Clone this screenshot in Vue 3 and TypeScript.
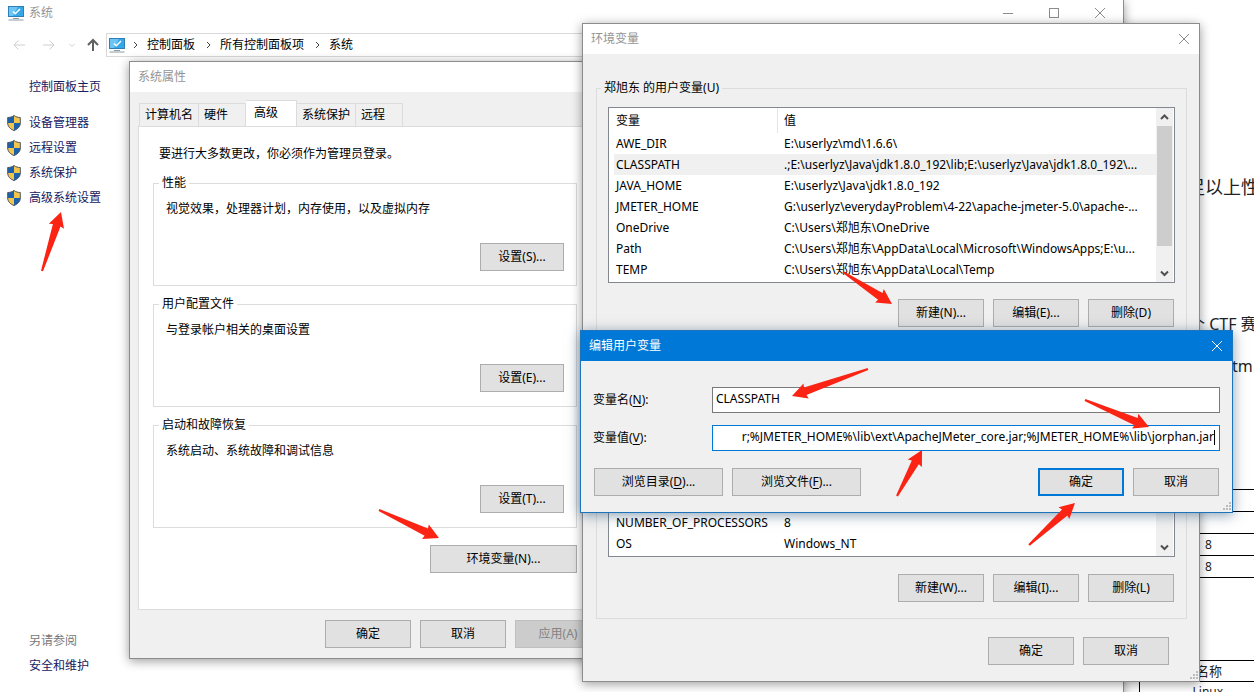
<script setup lang="ts">
import { ref } from 'vue'

interface Variable {
  name: string
  value: string
}

interface Arrow {
  tail: [number, number]
  tip: [number, number]
}

const crumbs: string[] = ['控制面板', '所有控制面板项', '系统']
const sideLinks: string[] = ['设备管理器', '远程设置', '系统保护', '高级系统设置']
const tabs: string[] = ['计算机名', '硬件', '高级', '系统保护', '远程']
const activeTab = ref('高级')

const groups = [
  { title: '性能', text: '视觉效果，处理器计划，内存使用，以及虚拟内存', button: '设置(S)...' },
  { title: '用户配置文件', text: '与登录帐户相关的桌面设置', button: '设置(E)...' },
  { title: '启动和故障恢复', text: '系统启动、系统故障和调试信息', button: '设置(T)...' },
]

const userVars: Variable[] = [
  { name: 'AWE_DIR', value: 'E:\\userlyz\\md\\1.6.6\\' },
  { name: 'CLASSPATH', value: '.;E:\\userlyz\\Java\\jdk1.8.0_192\\lib;E:\\userlyz\\Java\\jdk1.8.0_192\\...' },
  { name: 'JAVA_HOME', value: 'E:\\userlyz\\Java\\jdk1.8.0_192' },
  { name: 'JMETER_HOME', value: 'G:\\userlyz\\everydayProblem\\4-22\\apache-jmeter-5.0\\apache-...' },
  { name: 'OneDrive', value: 'C:\\Users\\郑旭东\\OneDrive' },
  { name: 'Path', value: 'C:\\Users\\郑旭东\\AppData\\Local\\Microsoft\\WindowsApps;E:\\u...' },
  { name: 'TEMP', value: 'C:\\Users\\郑旭东\\AppData\\Local\\Temp' },
]
const selected = ref('CLASSPATH')

const systemVars: Variable[] = [
  { name: 'NUMBER_OF_PROCESSORS', value: '8' },
  { name: 'OS', value: 'Windows_NT' },
]

const varName = ref('CLASSPATH')
const varValue = ref('r;%JMETER_HOME%\\lib\\ext\\ApacheJMeter_core.jar;%JMETER_HOME%\\lib\\jorphan.jar')

const arrows: Arrow[] = [
  { tail: [42, 271], tip: [61, 212] },
  { tail: [379, 510], tip: [439, 538] },
  { tail: [843, 272], tip: [892, 304] },
  { tail: [868, 369], tip: [792, 396] },
  { tail: [1085, 400], tip: [1149, 427] },
  { tail: [897, 496], tip: [922, 450] },
  { tail: [1029, 545], tip: [1075, 503] },
]

// Outline of a tapered arrow: narrow at the tail, barbed at the head.
function outline({ tail, tip }: Arrow): string {
  const dx = tail[0] - tip[0]
  const dy = tail[1] - tip[1]
  const length = Math.hypot(dx, dy)
  const ux = dx / length
  const uy = dy / length
  const shape: [number, number][] = [
    [0, 0], [15, 8], [14, 4], [length, 1], [length, -1], [14, -4], [15, -8],
  ]
  return shape
    .map(([a, p]) => `${(tip[0] + ux * a - uy * p).toFixed(1)},${(tip[1] + uy * a + ux * p).toFixed(1)}`)
    .join(' ')
}
</script>

<template>
  <main class="desktop">
    <article class="document">
      <p class="line-one">足以上性</p>
      <p class="line-two">个 CTF 赛</p>
      <p class="line-three">tm</p>
      <table class="grid-a">
        <tbody>
          <tr><td></td></tr>
          <tr><td></td></tr>
          <tr><td>8</td></tr>
          <tr><td>8</td></tr>
        </tbody>
      </table>
      <table class="grid-b">
        <tbody>
          <tr><td colspan="2" class="name">名称</td></tr>
          <tr><td class="narrow"></td><td class="os">Linux</td></tr>
        </tbody>
      </table>
    </article>

    <section class="window system">
      <header class="titlebar">
        <svg class="monitor" viewBox="0 0 16 16" aria-hidden="true">
          <rect x="0.5" y="1.5" width="15" height="10" fill="#35a7e8" stroke="#2d7fb5" />
          <path d="M1 2h9L5 11H1z" fill="#6cc5f3" />
          <path d="M5 6.500l2.300 2.300L12 4" fill="none" stroke="#fff" stroke-width="1.500" />
          <path d="M5 13.500h6M0.500 15h15" stroke="#8d9ba5" />
        </svg>
        <h1>系统</h1>
        <div class="controls">
          <button type="button" aria-label="最小化"><svg viewBox="0 0 12 12"><path d="M1 6.500h10" /></svg></button>
          <button type="button" aria-label="最大化"><svg viewBox="0 0 12 12"><rect x="1.5" y="1.5" width="9" height="9" /></svg></button>
          <button type="button" aria-label="关闭"><svg viewBox="0 0 12 12"><path d="M1 1l10 10M11 1L1 11" /></svg></button>
        </div>
      </header>
      <nav class="navbar">
        <button type="button" aria-label="后退"><svg class="nav-arrow" viewBox="0 0 14 14"><path d="M13 7H2M6.500 2.500L2 7l4.500 4.500" /></svg></button>
        <button type="button" aria-label="前进"><svg class="nav-arrow" viewBox="0 0 14 14"><path d="M1 7h11M7.500 2.500L12 7l-4.500 4.500" /></svg></button>
        <button type="button" class="recent" aria-label="最近"><svg class="nav-arrow small" viewBox="0 0 8 8"><path d="M1.500 3L4 5.500 6.500 3" /></svg></button>
        <button type="button" aria-label="向上"><svg class="nav-arrow up" viewBox="0 0 14 14"><path d="M7 13V2M2 7l5-5 5 5" /></svg></button>
        <div class="address">
          <svg class="monitor" viewBox="0 0 16 16" aria-hidden="true">
            <rect x="0.5" y="1.5" width="15" height="10" fill="#35a7e8" stroke="#2d7fb5" />
            <path d="M1 2h9L5 11H1z" fill="#6cc5f3" />
            <path d="M5 6.500l2.300 2.300L12 4" fill="none" stroke="#fff" stroke-width="1.500" />
            <path d="M5 13.500h6M0.500 15h15" stroke="#8d9ba5" />
          </svg>
          <template v-for="crumb in crumbs" :key="crumb">
            <svg class="chevron" viewBox="0 0 5 8" aria-hidden="true"><path d="M1 1l3 3-3 3" /></svg>
            <a href="#">{{ crumb }}</a>
          </template>
        </div>
      </nav>
      <aside class="sidebar">
        <a href="#" class="home">控制面板主页</a>
        <a v-for="link in sideLinks" :key="link" href="#" class="task">
          <svg class="shield" viewBox="0 0 14 16" aria-hidden="true">
            <path d="M7 0.500C5 2 3 2.500 0.700 2.500V8c0 3.500 2.500 6 6.300 7.500z" fill="#1b62ae" />
            <path d="M7 0.500c2 1.500 4 2 6.300 2V8c0 3.500-2.500 6-6.300 7.500z" fill="#f3c64b" />
            <path d="M0.700 8H7v7.500C3.200 14 0.700 11.500 0.700 8z" fill="#f3c64b" />
            <path d="M7 8h6.300c0 3.500-2.500 6-6.300 7.500z" fill="#1b62ae" />
            <path d="M7 0.500C5 2 3 2.500 0.700 2.500V8c0 3.500 2.500 6 6.300 7.500 3.800-1.500 6.300-4 6.300-7.500V2.500C11 2.500 9 2 7 0.500z" fill="none" stroke="#4c5560" />
          </svg>
          {{ link }}
        </a>
        <p class="see-also">另请参阅</p>
        <a href="#" class="maintenance">安全和维护</a>
      </aside>
    </section>

    <section class="window properties">
      <header class="titlebar"><h2>系统属性</h2></header>
      <div class="props-body">
        <div class="tabs" role="tablist">
          <button
            v-for="tab in tabs"
            :key="tab"
            type="button"
            role="tab"
            :aria-selected="tab === activeTab"
            :class="{ active: tab === activeTab }"
            @click="activeTab = tab"
          >{{ tab }}</button>
        </div>
        <div class="panel">
          <p class="notice">要进行大多数更改，你必须作为管理员登录。</p>
          <fieldset v-for="group in groups" :key="group.title">
            <legend>{{ group.title }}</legend>
            <p>{{ group.text }}</p>
            <button type="button" class="btn">{{ group.button }}</button>
          </fieldset>
          <button type="button" class="btn env-button">环境变量(N)...</button>
        </div>
        <div class="footer">
          <button type="button" class="btn">确定</button>
          <button type="button" class="btn">取消</button>
          <button type="button" class="btn" disabled>应用(A)</button>
        </div>
      </div>
    </section>

    <section class="window environment">
      <header class="titlebar">
        <h2>环境变量</h2>
        <button type="button" class="close" aria-label="关闭"><svg viewBox="0 0 12 12"><path d="M1 1l10 10M11 1L1 11" /></svg></button>
      </header>
      <div class="env-body">
        <fieldset>
          <legend>郑旭东 的用户变量(U)</legend>
          <div class="list">
            <table>
              <thead>
                <tr><th scope="col"><div class="divided">变量</div></th><th scope="col">值</th></tr>
              </thead>
              <tbody>
                <tr
                  v-for="item in userVars"
                  :key="item.name"
                  :class="{ selected: item.name === selected }"
                  @click="selected = item.name"
                >
                  <td>{{ item.name }}</td>
                  <td>{{ item.value }}</td>
                </tr>
              </tbody>
            </table>
            <div class="scrollbar">
              <svg viewBox="0 0 17 17"><path d="M5 10.500L8.500 7l3.500 3.500" /></svg>
              <div class="track"><div class="thumb"></div></div>
              <svg viewBox="0 0 17 17"><path d="M5 7l3.500 3.500L12 7" /></svg>
            </div>
          </div>
          <div class="actions">
            <button type="button" class="btn">新建(N)...</button>
            <button type="button" class="btn">编辑(E)...</button>
            <button type="button" class="btn">删除(D)</button>
          </div>
        </fieldset>
        <fieldset class="untitled">
          <div class="list end">
            <table>
              <tbody>
                <tr v-for="item in systemVars" :key="item.name">
                  <td>{{ item.name }}</td>
                  <td>{{ item.value }}</td>
                </tr>
              </tbody>
            </table>
            <div class="scrollbar">
              <svg viewBox="0 0 17 17"><path d="M5 10.500L8.500 7l3.500 3.500" /></svg>
              <div class="track"></div>
              <svg viewBox="0 0 17 17"><path d="M5 7l3.500 3.500L12 7" /></svg>
            </div>
          </div>
          <div class="actions">
            <button type="button" class="btn">新建(W)...</button>
            <button type="button" class="btn">编辑(I)...</button>
            <button type="button" class="btn">删除(L)</button>
          </div>
        </fieldset>
        <div class="footer">
          <button type="button" class="btn">确定</button>
          <button type="button" class="btn">取消</button>
        </div>
      </div>
      <svg class="grip" viewBox="0 0 10 10" aria-hidden="true">
        <path d="M7 0h2v2H7zM7 3h2v2H7zM4 3h2v2H4zM7 6h2v2H7zM4 6h2v2H4zM1 6h2v2H1z" />
      </svg>
    </section>

    <section class="window editor">
      <header class="titlebar">
        <h2>编辑用户变量</h2>
        <button type="button" class="close" aria-label="关闭"><svg viewBox="0 0 12 12"><path d="M1 1l10 10M11 1L1 11" /></svg></button>
      </header>
      <form class="edit-body" @submit.prevent>
        <label for="var-name">变量名(<u>N</u>):</label>
        <div class="field"><input id="var-name" v-model="varName" type="text" /></div>
        <label for="var-value">变量值(<u>V</u>):</label>
        <div class="field focused">
          <input id="var-value" v-model="varValue" type="text" />
          <span class="caret"></span>
        </div>
        <div class="edit-actions">
          <button type="button" class="btn wide">浏览目录(<u>D</u>)...</button>
          <button type="button" class="btn wide">浏览文件(<u>F</u>)...</button>
          <button type="submit" class="btn primary">确定</button>
          <button type="button" class="btn">取消</button>
        </div>
      </form>
      <svg class="grip" viewBox="0 0 10 10" aria-hidden="true">
        <path d="M7 0h2v2H7zM7 3h2v2H7zM4 3h2v2H4zM7 6h2v2H7zM4 6h2v2H4zM1 6h2v2H1z" />
      </svg>
    </section>

    <svg class="arrows" aria-hidden="true">
      <polygon v-for="(arrow, i) in arrows" :key="i" :points="outline(arrow)" />
    </svg>
  </main>
</template>

<style>
body {
  margin: 0;
  overflow: hidden;
}
</style>

<style scoped>
.desktop {
  position: relative;
  height: 100vh;
  overflow: hidden;
  background: #fff;
  color: #000;
  font-family: "Noto Sans", "Noto Sans CJK SC", sans-serif;
  font-size: 12px;
  line-height: 16px;
}
.desktop * {
  box-sizing: border-box;
}
h1,
h2,
p {
  margin: 0;
  font-size: 12px;
  font-weight: 400;
}
button,
input {
  font: inherit;
  color: inherit;
}
button {
  padding: 0;
  border: 0;
  background: none;
}
a {
  color: inherit;
  text-decoration: none;
}
u {
  text-underline-offset: 2px;
}
table {
  border-collapse: collapse;
}

/* Document behind the windows */
.document {
  position: absolute;
  top: 0;
  right: 0;
  width: 134px;
  padding-top: 175px;
  color: #222;
  line-height: 24px;
  white-space: nowrap;
}
.document p {
  font-size: 16px;
}
.document .line-one {
  margin-left: 67px;
  font-size: 18px;
}
.document .line-two {
  margin-top: 113px;
  margin-left: 69px;
}
.document .line-three {
  margin-top: 18px;
  margin-left: 112px;
}
.document table {
  width: 100%;
  line-height: 16px;
}
.document td {
  height: 22px;
  padding: 0;
  border-top: 1px solid #000;
  border-bottom: 1px solid #000;
}
.grid-a {
  margin-top: 111px;
}
.grid-a td {
  padding-left: 85px;
}
.grid-b {
  margin-top: 82px;
}
.document .grid-b td {
  height: 21px;
}
.document .grid-b .name {
  padding-left: 76px;
  font-size: 13px;
}
.grid-b .narrow {
  width: 19px;
  border-right: 1px solid #000;
}
.document .grid-b .os {
  padding-left: 53px;
}

/* Windows */
.window {
  position: absolute;
  border: 1px solid #8c8c8c;
  background: #f0f0f0;
  box-shadow: 0 2px 10px rgba(0, 0, 0, 0.4);
}
.titlebar {
  display: flex;
  align-items: center;
  justify-content: space-between;
  height: 30px;
  padding: 0 8px;
  background: #fff;
  color: #949494;
}
.titlebar button {
  display: flex;
  align-items: center;
  justify-content: center;
}
.titlebar button svg {
  width: 12px;
  height: 12px;
  fill: none;
  stroke: #8c8c8c;
}
.btn {
  width: 86px;
  height: 28px;
  border: 1px solid #adadad;
  background: #e1e1e1;
  white-space: nowrap;
}
.btn:disabled {
  border-color: #bfbfbf;
  background: #ccc;
  color: #838383;
}
.footer {
  display: flex;
  justify-content: flex-end;
  gap: 9px;
}
fieldset {
  min-width: 0;
  margin: 0;
  border: 1px solid #dcdcdc;
}
.grip {
  position: absolute;
  right: 0;
  bottom: 0;
  width: 10px;
  height: 10px;
  fill: #bcbcbc;
}

/* System window */
.system {
  top: 0;
  right: 130px;
  bottom: -8px;
  left: 0;
  display: flex;
  flex-direction: column;
  border-width: 0 1px 0 0;
  background: #fff;
}
.monitor {
  flex: none;
  width: 16px;
  height: 16px;
}
.system .titlebar {
  flex: none;
  height: 26px;
  justify-content: flex-start;
  gap: 5px;
}
.controls {
  display: flex;
  gap: 34px;
  margin-left: auto;
  margin-right: 9px;
}
.navbar {
  display: flex;
  align-items: center;
  flex: none;
  height: 38px;
  padding-left: 12px;
}
.navbar button {
  display: flex;
  margin-right: 16px;
}
.navbar .recent {
  margin-right: 10px;
}
.navbar button:nth-child(2) {
  margin-right: 12px;
}
.nav-arrow {
  width: 14px;
  height: 14px;
  fill: none;
  stroke: #cfcfcf;
}
.nav-arrow.small {
  width: 8px;
  height: 8px;
}
.nav-arrow.up {
  stroke: #606060;
  stroke-width: 2;
}
.navbar button:nth-child(4) {
  margin-right: 6px;
}
.address {
  display: flex;
  flex: 1;
  align-items: center;
  height: 24px;
  padding-left: 2px;
  border: 1px solid #d9d9d9;
}
.address a {
  margin: 0 10px 0 9px;
}
.chevron {
  width: 5px;
  height: 8px;
  fill: none;
  stroke: #444;
}
.monitor + .chevron {
  margin-left: 8px;
}
.address a + .chevron {
  margin-left: 1px;
}
.sidebar {
  display: flex;
  flex: 1;
  flex-direction: column;
  padding: 10px 0 22px 7px;
  color: #17205f;
  line-height: 25px;
}
.home,
.maintenance,
.see-also {
  padding-left: 22px;
}
.home {
  margin-bottom: 11px;
}
.task {
  display: flex;
  align-items: center;
  gap: 8px;
}
.task:hover,
.home:hover {
  text-decoration: underline;
}
.shield {
  width: 14px;
  height: 16px;
}
.see-also {
  margin-top: auto;
  color: #777;
}

/* System properties */
.properties {
  top: 61px;
  left: 129px;
  width: 481px;
}
.props-body {
  padding: 8px 8px 10px;
}
.tabs {
  display: flex;
  align-items: flex-end;
  height: 26px;
  padding-left: 1px;
}
.tabs button {
  height: 23px;
  padding: 0 5px;
  border: 1px solid #dcdcdc;
  border-bottom: 0;
  background: #f0f0f0;
  text-align: left;
}
.tabs button + button {
  min-width: 47px;
  border-left: 0;
}
.tabs button.active {
  height: 26px;
  padding: 0 18px 2px 8px;
  background: #fff;
}
.panel {
  display: flex;
  flex-direction: column;
  padding: 19px 23px 36px 14px;
  border: 1px solid #dcdcdc;
  background: #fff;
}
.notice {
  margin: 0 0 13px 6px;
}
.panel fieldset {
  display: flex;
  flex-direction: column;
  padding: 10px 12px 14px;
}
.panel fieldset + fieldset {
  margin-top: 10px;
}
.panel legend {
  margin-left: -7px;
  padding: 0 3px;
}
.panel fieldset .btn {
  align-self: flex-end;
  width: 84px;
  margin-top: 26px;
}
.env-button {
  align-self: flex-end;
  width: 147px;
  margin-top: 17px;
}
.props-body .footer {
  padding-top: 10px;
}

/* Environment variables */
.environment {
  top: 23px;
  right: 54px;
  left: 582px;
}
.environment .titlebar {
  padding-right: 9px;
}
.env-body {
  padding: 26px 12px 16px 13px;
}
.env-body fieldset {
  padding: 11px 11px 16px;
}
.env-body legend {
  margin-left: -7px;
  padding: 0 3px;
}
.env-body .untitled {
  margin-top: 18px;
  padding-top: 18px;
}
.list {
  display: flex;
  height: 176px;
  border: 1px solid #828790;
  background: #fff;
}
.list table {
  flex: 1;
  align-self: flex-start;
  margin-left: 5px;
  table-layout: fixed;
}
.list.end table {
  align-self: flex-end;
  margin-bottom: 2px;
}
.list th,
.list td {
  height: 21px;
  padding: 0 0 0 2px;
  font-weight: 400;
  text-align: left;
  white-space: nowrap;
}
.list th {
  height: 25px;
}
.list th:first-child,
.list td:first-child {
  width: 168px;
}
.divided {
  margin-right: 4px;
  border-right: 1px solid #e5e5e5;
  line-height: 25px;
}
.list .selected {
  background: #f0f0f0;
}
.scrollbar {
  display: flex;
  flex-direction: column;
  align-self: stretch;
  width: 17px;
  margin-right: 1px;
  background: #f0f0f0;
}
.scrollbar svg {
  width: 17px;
  height: 18px;
  fill: none;
  stroke: #505050;
  stroke-width: 2;
}
.track {
  flex: 1;
  padding: 0 1px;
}
.thumb {
  height: 87%;
  background: #cdcdcd;
}
.actions {
  display: flex;
  justify-content: flex-end;
  gap: 9px;
  margin-top: 16px;
  padding-right: 1px;
}
.untitled .actions {
  margin-top: 17px;
}
.env-body .footer {
  margin-top: 18px;
  padding-right: 18px;
}

/* Edit user variable */
.editor {
  top: 330px;
  right: 21px;
  left: 580px;
  border-color: #1c74bd;
  box-shadow: 0 2px 12px rgba(20, 60, 100, 0.5);
}
.editor .titlebar {
  padding-right: 9px;
  background: #0078d7;
  color: #fff;
}
.editor .titlebar button svg {
  stroke: #fff;
}
.edit-body {
  display: grid;
  grid-template-columns: 119px 1fr;
  row-gap: 12px;
  align-items: center;
  padding: 26px 12px 16px;
}
.field {
  display: flex;
  height: 26px;
  padding: 0 4px 3px 3px;
  border: 1px solid #7a7a7a;
  background: #fff;
}
.field.focused {
  border-color: #0078d7;
}
.field input {
  flex: 1;
  min-width: 0;
  padding: 0;
  border: 0;
  outline: 0;
  background: none;
}
.focused input {
  text-align: right;
}
.caret {
  width: 1px;
  margin: 4px 0 2px;
  background: #000;
}
.edit-actions {
  display: flex;
  grid-column: 1 / 3;
  gap: 9px;
  margin-top: 5px;
  padding: 0 1px;
}
.btn.wide {
  width: 129px;
}
.btn.primary {
  margin-left: auto;
  border: 2px solid #0078d7;
}

.arrows {
  position: absolute;
  top: 0;
  left: 0;
  width: 100%;
  height: 100%;
  fill: #fb2414;
  pointer-events: none;
}
</style>
